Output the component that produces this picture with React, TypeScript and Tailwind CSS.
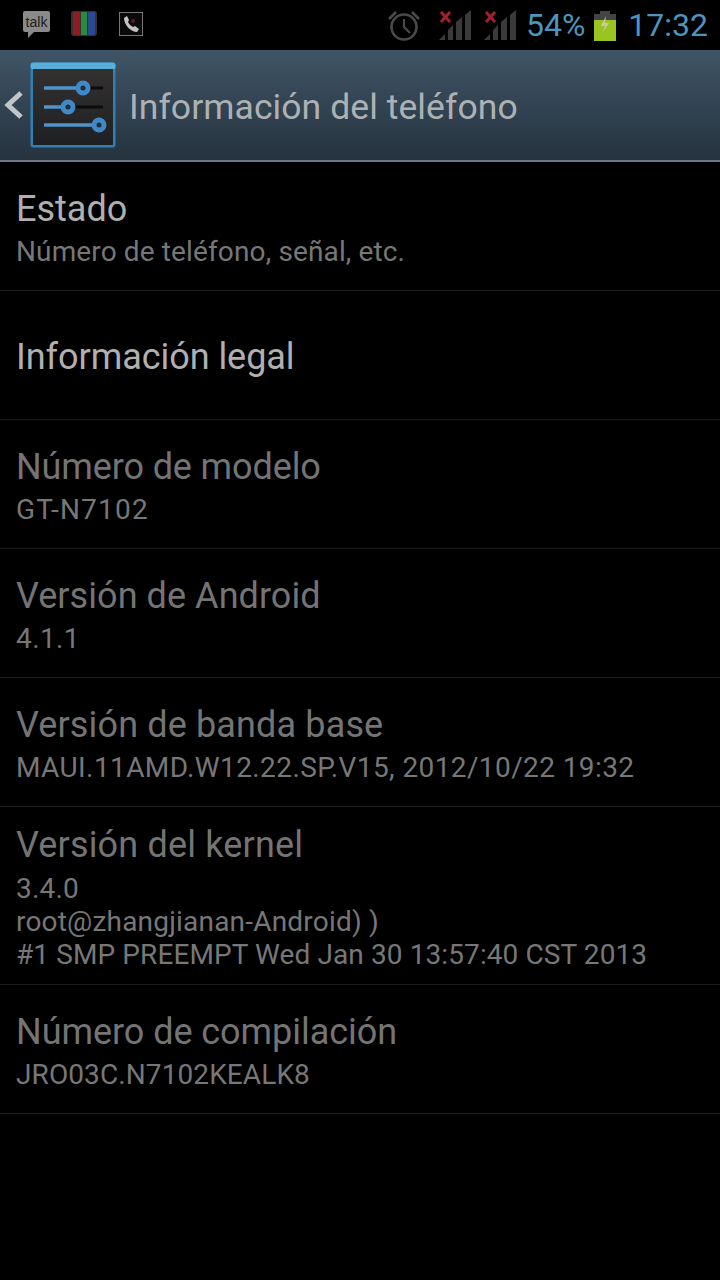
import React from "react";

const rows: { title: string; titleClass: string; lines: { text: string; cls: string }[]; bright?: boolean }[] = [
  { title: "Estado", titleClass: "tracking-[0px]", lines: [{ text: "Número de teléfono, señal, etc.", cls: "tracking-[0.13px]" }], bright: true },
  { title: "Información legal", titleClass: "tracking-[-0.05px]", lines: [], bright: true },
  { title: "Número de modelo", titleClass: "tracking-[-0.12px]", lines: [{ text: "GT-N7102", cls: "tracking-[1.2px]" }] },
  { title: "Versión de Android", titleClass: "tracking-[0.06px]", lines: [{ text: "4.1.1", cls: "tracking-[0.4px]" }] },
  { title: "Versión de banda base", titleClass: "tracking-[0.14px]", lines: [{ text: "MAUI.11AMD.W12.22.SP.V15, 2012/10/22 19:32", cls: "tracking-[0.4px]" }] },
  {
    title: "Versión del kernel",
    titleClass: "tracking-[0.17px]",
    lines: [
      { text: "3.4.0", cls: "tracking-[0.2px]" },
      { text: "root@zhangjianan-Android) )", cls: "tracking-[0.2px]" },
      { text: "#1 SMP PREEMPT Wed Jan 30 13:57:40 CST 2013", cls: "tracking-[0.1px]" },
    ],
  },
  { title: "Número de compilación", titleClass: "tracking-[-0.05px]", lines: [{ text: "JRO03C.N7102KEALK8", cls: "tracking-[0.1px]" }] },
];

function Signal() {
  return (
    <svg width="34" height="32" viewBox="0 0 34 32">
      <path d="M0 31 L6 31 L6 25 Z" fill="#3a3a3a" />
      <path d="M9 31 V21 L14 16 V31 Z" fill="#3a3a3a" />
      <path d="M17 31 V13 L23 8 V31 Z" fill="#3a3a3a" />
      <path d="M26 31 V6 L32 1 V31 Z" fill="#3a3a3a" />
      <path d="M2 3 L11 13 M11 3 L2 13" stroke="#a3212a" strokeWidth="3" />
    </svg>
  );
}

function Sliders() {
  return (
    <svg width="86" height="86" viewBox="0 0 86 86">
      <defs>
        <linearGradient id="panel" x1="0" y1="0" x2="0" y2="1">
          <stop offset="0" stopColor="#333130" />
          <stop offset="1" stopColor="#1f2022" />
        </linearGradient>
      </defs>
      <rect x="0.5" y="0.5" width="85" height="85" rx="3" fill="#2f7fb8" />
      <rect x="0.5" y="0.5" width="85" height="7" rx="3" fill="#58aedb" />
      <rect x="3" y="7" width="80" height="76" fill="url(#panel)" />
      <path d="M14 26 H50" stroke="#4f93c8" strokeWidth="3.5" />
      <path d="M54 26 H73" stroke="#0c0c0c" strokeWidth="3" />
      <path d="M14 45 H36" stroke="#4f93c8" strokeWidth="3.5" />
      <path d="M40 45 H73" stroke="#0c0c0c" strokeWidth="3" />
      <path d="M14 63 H68" stroke="#4f93c8" strokeWidth="3.5" />
      <circle cx="53" cy="26" r="5" fill="#1d2c3a" stroke="#3f8ac6" strokeWidth="5" />
      <circle cx="38" cy="45" r="5" fill="#1d2c3a" stroke="#3f8ac6" strokeWidth="5" />
      <circle cx="69" cy="63" r="5" fill="#1d2c3a" stroke="#3f8ac6" strokeWidth="5" />
    </svg>
  );
}

export default function App() {
  return (
    <div className="w-[720px] h-[1280px] bg-black overflow-hidden font-['Roboto',sans-serif]">
      <div className="h-[50px] flex items-center pl-[22px] pr-[12px]">
        <svg width="29" height="28" viewBox="0 0 29 28" className="mt-[-2px]">
          <rect x="1" y="1" width="27" height="21" rx="2" fill="#8a8a8a" />
          <path d="M6 22 V28 L12 22 Z" fill="#8a8a8a" />
          <text x="14.5" y="16.5" fontSize="14" textAnchor="middle" fill="#1c1c1c" fontFamily="Liberation Sans">talk</text>
        </svg>
        <svg width="26" height="26" viewBox="0 0 26 26" className="ml-[20px] mt-[-2px]">
          <rect width="26" height="25" rx="3" fill="#333" />
          <rect x="2" y="1" width="7" height="23" fill="#8f1c22" />
          <rect x="10" y="1" width="6" height="23" fill="#2b8a3b" />
          <rect x="17" y="1" width="7" height="23" fill="#2c4a94" />
        </svg>
        <svg width="24" height="24" viewBox="0 0 24 24" className="ml-[22px] mt-[-2px]">
          <rect x="0.5" y="0.5" width="23" height="23" fill="#0a0a0a" stroke="#777" />
          <path d="M5 6 L8 4 L10 8 L9 10 C10 12 12 14 14 15 L16 14 L20 17 L18 20 C12 20 5 13 5 6 Z" fill="#c4c4c4" />
          <circle cx="14" cy="9" r="2" fill="#5a1c22" />
        </svg>
        <div className="flex-1" />
        <svg width="34" height="32" viewBox="0 0 34 32" className="mr-[18px] mt-[2px]">
          <circle cx="17" cy="17" r="12.5" fill="none" stroke="#4a4a4a" strokeWidth="2.6" />
          <path d="M17 9 V17 L23 23" fill="none" stroke="#4a4a4a" strokeWidth="2.2" />
          <path d="M2 9 L9 2 M32 9 L25 2" stroke="#4a4a4a" strokeWidth="2.6" />
        </svg>
        <Signal />
        <div className="ml-[11px]"><Signal /></div>
        <span className="ml-[8px] text-[32px] leading-[50px] text-[#4a96bf]">54%</span>
        <svg width="22" height="30" viewBox="0 0 22 30" className="ml-[9px] mt-[1px]">
          <rect x="6" y="0" width="10" height="4" fill="#444" />
          <rect x="0" y="3" width="22" height="6" fill="#444" />
          <rect x="0" y="9" width="22" height="21" fill="#9ac521" />
          <path d="M12 5 L7 15 H11 L9 21 L15 12 H11 Z" fill="#c9c9a8" />
        </svg>
        <span className="ml-[12px] text-[32px] leading-[50px] text-[#4a96bf]">17:32</span>
      </div>

      <div className="h-[112px] flex items-center border-b-2 border-[#6c7884] bg-gradient-to-b from-[#3f5566] to-[#26333f]">
        <svg width="20" height="30" viewBox="0 0 20 30" className="ml-[3px] shrink-0">
          <path d="M18 3 L5 15 L18 27" fill="none" stroke="#c2c6c9" strokeWidth="5" />
        </svg>
        <div className="ml-[7px] flex"><Sliders /></div>
        <span className="ml-[13px] mt-[6px] text-[35.5px] tracking-[0.08px] text-[#adb1b4]">Información del teléfono</span>
      </div>

      <div>
        {rows.map((r) => (
          <div key={r.title} className={`flex flex-col justify-center min-h-[129px] border-b border-[#1c1c1c] px-[16px] pb-[13px] ${r.lines.length === 0 ? "pt-[16px]" : "pt-[14px]"}`}>
            <div className={`text-[36px] leading-[48px] ${r.titleClass} ${r.bright ? "text-[#b0b0b0]" : "text-[#747474]"}`}>{r.title}</div>
            {r.lines.map((l, i) => (
              <div key={l.text} className={`text-[28px] leading-[33px] ${l.cls} text-[#777777] ${i === 0 ? (r.lines.length > 1 ? "mt-[3px]" : "mt-[2px]") : ""}`}>{l.text}</div>
            ))}
          </div>
        ))}
      </div>
    </div>
  );
}
